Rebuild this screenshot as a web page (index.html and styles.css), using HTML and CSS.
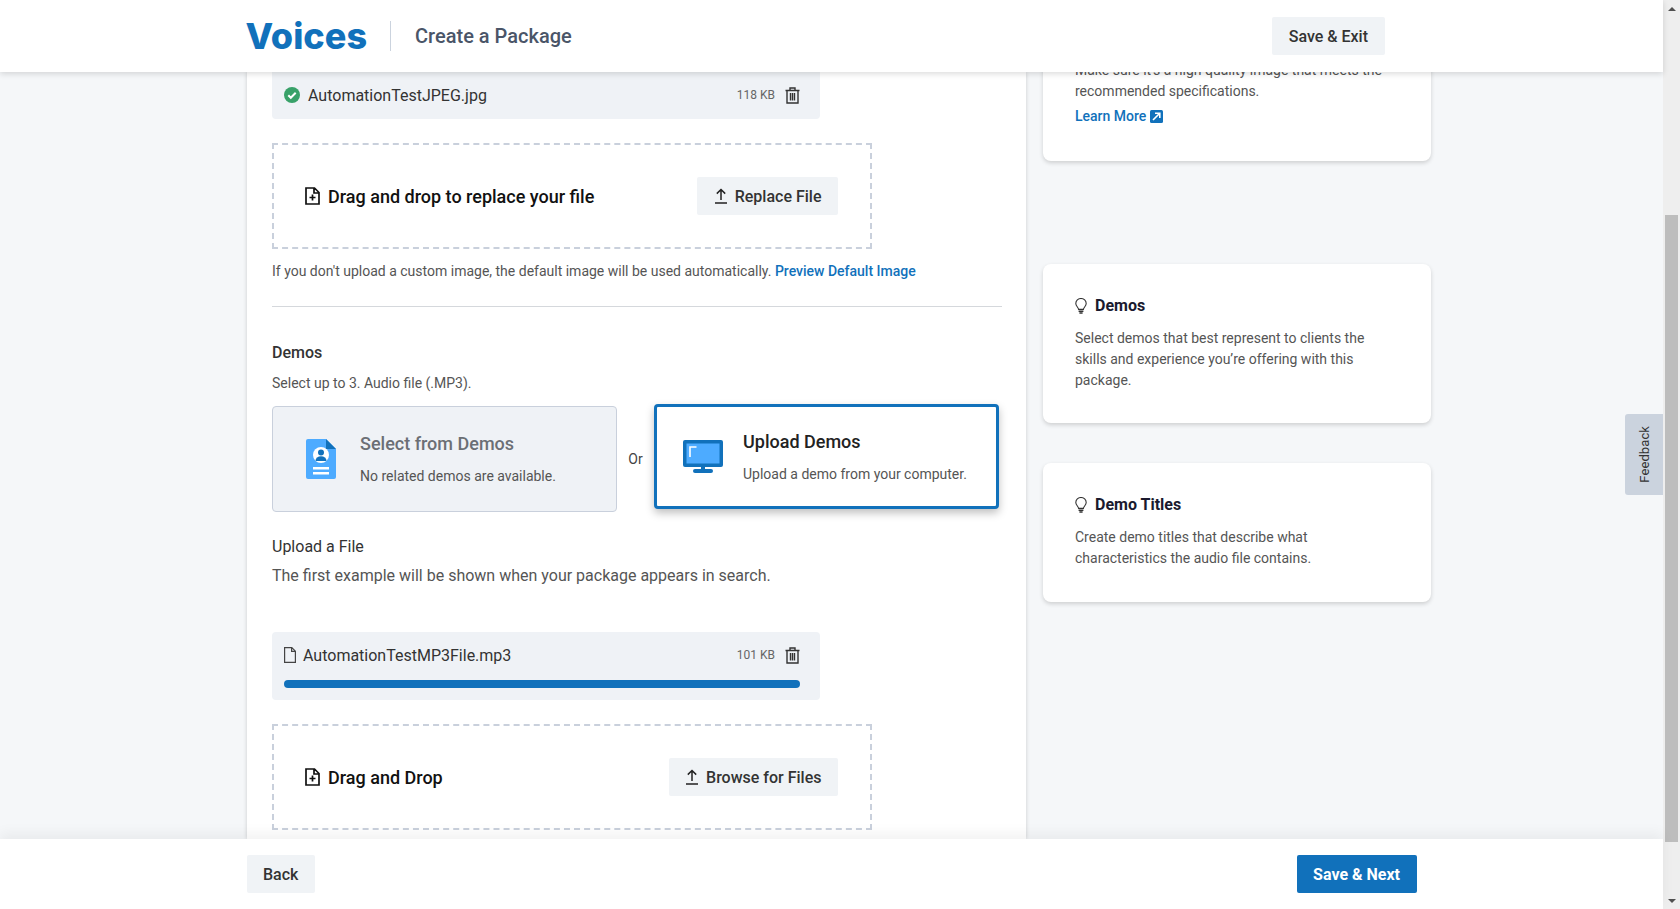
FILE: index.html
```html
<!DOCTYPE html>
<html lang="en">
<head>
    <meta charset="UTF-8">
    <meta name="viewport" content="width=device-width, initial-scale=1.0">
    <title>Create a Package</title>
    <link rel="stylesheet" href="styles.css">
</head>
<body>
    <div class="app">
        <header class="topbar">
            <div class="wrap topbar-inner">
                <div class="brand">
                    <span class="logo">Voices</span>
                    <span class="page-title">Create a Package</span>
                </div>
                <button class="btn">Save &amp; Exit</button>
            </div>
        </header>

        <div class="scroll-area">
            <main class="main-card">
                <div class="file-row file-row-top">
                    <div class="file-line">
                        <svg class="icon-check" width="16" height="16" viewBox="0 0 16 16"><circle cx="8" cy="8" r="8" fill="#38a169"/><path d="M4.3 8.3l2.5 2.5 4.9-5" fill="none" stroke="#fff" stroke-width="2"/></svg>
                        <span class="file-name">AutomationTestJPEG.jpg</span>
                        <span class="file-size">118 KB</span>
                        <svg class="icon-trash" width="15" height="17" viewBox="0 0 15 17" fill="none" stroke="#333" stroke-width="1.4"><path d="M0.5 3.5h14M5 3.5V1h5v2.5M2 3.5V16h11V3.5M5.5 6v7.5M7.5 6v7.5M9.5 6v7.5"/></svg>
                    </div>
                </div>

                <div class="dropzone">
                    <div class="drop-label">
                        <svg width="15" height="18" viewBox="0 0 15 18" fill="none" stroke="#111" stroke-width="1.7"><path d="M1 1h8.5L14 5.5V17H1zM9 1v5h5M7.5 7.5v6M4.5 10.5h6"/></svg>
                        <span>Drag and drop to replace your file</span>
                    </div>
                    <button class="btn btn-upload">
                        <svg width="14" height="16" viewBox="0 0 14 16" fill="none" stroke="#222" stroke-width="1.5"><path d="M7 12V1.5M2.8 5.6L7 1.5l4.2 4.1M1 15h12"/></svg>
                        Replace File
                    </button>
                </div>

                <p class="help">If you don't upload a custom image, the default image will be used automatically. <a class="link" href="#">Preview Default Image</a></p>

                <hr class="divider">

                <h3 class="section-title">Demos</h3>
                <p class="section-sub">Select up to 3. Audio file (.MP3).</p>

                <div class="choice-row">
                    <div class="choice choice-disabled">
                        <svg width="30" height="40" viewBox="0 0 30 40"><path d="M2 0h18l10 10v28a2 2 0 0 1-2 2H2a2 2 0 0 1-2-2V2a2 2 0 0 1 2-2z" fill="#4dabff"/><path d="M20 0l10 10H20z" fill="#1171bb"/><circle cx="15" cy="16" r="8" fill="#fff"/><circle cx="15" cy="13.5" r="3" fill="#1171bb"/><path d="M9.5 22a5.5 4.8 0 0 1 11 0z" fill="#1171bb"/><path d="M7 28h16v2.4H7zM7 33h16v2.4H7z" fill="#fff"/></svg>
                        <div class="choice-text">
                            <div class="choice-title">Select from Demos</div>
                            <div class="choice-desc">No related demos are available.</div>
                        </div>
                    </div>
                    <span class="or">Or</span>
                    <div class="choice choice-active">
                        <svg width="40" height="33" viewBox="0 0 40 33"><rect width="40" height="27" rx="2" fill="#1171bb"/><rect x="3.5" y="3.5" width="33" height="20" fill="#4dabff"/><path d="M7 17V7h6.5" fill="none" stroke="#fff" stroke-width="1.6"/><path d="M18 27h4v3h-4z" fill="#1171bb"/><rect x="10" y="29" width="20" height="4" rx="2" fill="#1171bb"/></svg>
                        <div class="choice-text">
                            <div class="choice-title">Upload Demos</div>
                            <div class="choice-desc">Upload a demo from your computer.</div>
                        </div>
                    </div>
                </div>

                <h3 class="upload-title">Upload a File</h3>
                <p class="upload-sub">The first example will be shown when your package appears in search.</p>

                <div class="file-row file-row-progress">
                    <div class="file-line">
                        <svg class="icon-file" width="12" height="16" viewBox="0 0 12 16" fill="none" stroke="#444" stroke-width="1.2"><path d="M0.6 0.6h7.2l3.6 3.6v11.2H0.6zM7.6 0.6v3.8h3.8"/></svg>
                        <span class="file-name">AutomationTestMP3File.mp3</span>
                        <span class="file-size">101 KB</span>
                        <svg class="icon-trash" width="15" height="17" viewBox="0 0 15 17" fill="none" stroke="#333" stroke-width="1.4"><path d="M0.5 3.5h14M5 3.5V1h5v2.5M2 3.5V16h11V3.5M5.5 6v7.5M7.5 6v7.5M9.5 6v7.5"/></svg>
                    </div>
                    <div class="progress"></div>
                </div>

                <div class="dropzone">
                    <div class="drop-label">
                        <svg width="15" height="18" viewBox="0 0 15 18" fill="none" stroke="#111" stroke-width="1.7"><path d="M1 1h8.5L14 5.5V17H1zM9 1v5h5M7.5 7.5v6M4.5 10.5h6"/></svg>
                        <span>Drag and Drop</span>
                    </div>
                    <button class="btn btn-upload">
                        <svg width="14" height="16" viewBox="0 0 14 16" fill="none" stroke="#222" stroke-width="1.5"><path d="M7 12V1.5M2.8 5.6L7 1.5l4.2 4.1M1 15h12"/></svg>
                        Browse for Files
                    </button>
                </div>
            </main>

            <aside class="sidebar">
                <div class="tip tip-clipped">
                    <p class="tip-text">Make sure it's a high quality image that meets the recommended specifications.</p>
                    <a class="link learn-more" href="#">Learn More
                        <svg width="13" height="13" viewBox="0 0 13 13"><rect width="13" height="13" rx="1.5" fill="#1171bb"/><path d="M3 10l6-6M5 3.2h4.8V8" fill="none" stroke="#fff" stroke-width="1.6"/></svg>
                    </a>
                </div>
                <div class="tip tip-demos">
                    <h4 class="tip-title">
                        <svg width="12" height="16" viewBox="0 0 12 16" fill="none" stroke="#333" stroke-width="1.1"><path d="M3.6 11.4C3.4 9.4 0.8 8.2 0.8 5.4a5.2 4.9 0 0 1 10.4 0c0 2.8-2.6 4-2.8 6z"/><path d="M3.6 13.2h4.8M4.4 15h3.2" stroke-width="1.6"/></svg>
                        Demos
                    </h4>
                    <p class="tip-text">Select demos that best represent to clients the skills and experience you’re offering with this package.</p>
                </div>
                <div class="tip tip-titles">
                    <h4 class="tip-title">
                        <svg width="12" height="16" viewBox="0 0 12 16" fill="none" stroke="#333" stroke-width="1.1"><path d="M3.6 11.4C3.4 9.4 0.8 8.2 0.8 5.4a5.2 4.9 0 0 1 10.4 0c0 2.8-2.6 4-2.8 6z"/><path d="M3.6 13.2h4.8M4.4 15h3.2" stroke-width="1.6"/></svg>
                        Demo Titles
                    </h4>
                    <p class="tip-text">Create demo titles that describe what characteristics the audio file contains.</p>
                </div>
            </aside>

            <div class="feedback"><span>Feedback</span></div>
        </div>

        <footer class="bottombar">
            <div class="wrap bottombar-inner">
                <button class="btn">Back</button>
                <button class="btn btn-primary">Save &amp; Next</button>
            </div>
        </footer>
    </div>

    <div class="scrollbar">
        <div class="arrow arrow-up"></div>
        <div class="track"><div class="thumb"></div></div>
        <div class="arrow arrow-down"></div>
    </div>
</body>
</html>
```

FILE: styles.css
```css
* {
    box-sizing: border-box;
}
body {
    font-family: Roboto, "Liberation Sans", sans-serif;
    margin: 0;
    height: 100vh;
    overflow: hidden;
    display: flex;
    background-color: #f5f7f9;
    color: #222;
}
.app {
    flex: 1;
    min-width: 0;
    display: flex;
    flex-direction: column;
    height: 100%;
}
.wrap {
    width: 1170px;
    margin: 0 auto;
}
button {
    font-family: inherit;
    cursor: pointer;
}
.link {
    color: #1171bb;
    font-weight: 500;
    text-decoration: none;
}

/* Top bar */
.topbar {
    flex: none;
    height: 72px;
    background: #fff;
    box-shadow: 0 2px 6px rgba(0, 0, 0, 0.14);
    position: relative;
    z-index: 2;
}
.topbar-inner {
    height: 100%;
    display: flex;
    align-items: center;
    justify-content: space-between;
    padding-right: 32px;
}
.brand {
    display: flex;
    align-items: center;
}
.logo {
    font-family: Inter, sans-serif;
    font-weight: 800;
    font-size: 36px;
    color: #1171bb;
    margin-left: -1px;
    padding-right: 23px;
}
.page-title {
    font-size: 20px;
    font-weight: 500;
    color: #4a5568;
    border-left: 1px solid #cbd3de;
    line-height: 30px;
    padding-left: 24px;
}
.btn {
    height: 38px;
    padding: 0 16.5px;
    background: #f0f3f6;
    border: 0;
    border-radius: 2px;
    font-size: 16px;
    font-weight: 500;
    color: #333;
}
.btn-primary {
    background: #1171bb;
    color: #fff;
    font-weight: 700;
}
.btn-upload {
    display: flex;
    align-items: center;
    gap: 7px;
}

/* Main column */
.scroll-area {
    flex: 1;
    min-height: 0;
    position: relative;
    overflow: hidden;
    display: flex;
    align-items: flex-start;
    gap: 17px;
    padding-left: 247px;
}
.main-card {
    flex: none;
    width: 779px;
    height: 100%;
    overflow: hidden;
    background: #fff;
    padding: 0 24px 0 25px;
    box-shadow: 0 0 4px rgba(0, 0, 0, 0.18);
}
.file-row {
    width: 548px;
    background: #eff2f6;
    border-radius: 4px;
    padding: 0 20px 0 12px;
}
.file-row-top {
    height: 47px;
    padding-top: 11px;
    border-radius: 0 0 4px 4px;
}
.file-row-progress {
    height: 68px;
    margin-top: 44px;
    padding-top: 11px;
}
.file-line {
    display: flex;
    align-items: center;
    height: 24px;
}
.icon-check {
    margin-right: 8px;
}
.icon-file {
    margin-right: 7px;
}
.file-name {
    flex: 1;
    font-size: 16px;
    color: #333;
}
.file-size {
    font-size: 12px;
    color: #666;
    margin-right: 10px;
}
.progress {
    height: 8px;
    margin-top: 13px;
    background: #1171bb;
    border-radius: 4px;
}
.dropzone {
    width: 600px;
    height: 106px;
    margin-top: 24px;
    border: 2px dashed #c9d0dc;
    display: flex;
    align-items: center;
    justify-content: space-between;
    padding: 0 32px 0 31px;
}
.drop-label {
    display: flex;
    align-items: center;
    gap: 8px;
    font-size: 18px;
    font-weight: 500;
    color: #111;
}
.help {
    margin: 12px 0 0;
    font-size: 14px;
    line-height: 20px;
    color: #555;
}
.divider {
    margin: 25px 0 0;
    border: 0;
    border-top: 1px solid #d5d8dc;
}
.section-title {
    margin: 34px 0 0;
    font-size: 16px;
    line-height: 24px;
    font-weight: 500;
    color: #333;
}
.section-sub {
    margin: 8px 0 0;
    font-size: 14px;
    line-height: 20px;
    color: #555;
}
.choice-row {
    display: flex;
    align-items: flex-start;
    margin-top: 11px;
}
.choice {
    width: 345px;
    display: flex;
    align-items: center;
    border-radius: 4px;
}
.choice-disabled {
    height: 106px;
    margin-top: 2px;
    background: #eff2f6;
    border: 1px solid #c9d0dc;
    padding-left: 33px;
    gap: 24px;
}
.choice-disabled .choice-title {
    color: #6b6f75;
}
.choice-active {
    height: 105px;
    background: #fff;
    border: 3px solid #1171bb;
    box-shadow: 0 4px 8px rgba(0, 0, 0, 0.25);
    padding-left: 26px;
    gap: 20px;
}
.or {
    width: 37px;
    text-align: center;
    font-size: 14px;
    line-height: 20px;
    margin-top: 45px;
    color: #444;
}
.choice-title {
    font-size: 18px;
    line-height: 24px;
    font-weight: 500;
    color: #222;
}
.choice-desc {
    margin-top: 10px;
    font-size: 14px;
    line-height: 20px;
    color: #555;
}
.upload-title {
    margin: 23px 0 0;
    font-size: 16px;
    line-height: 24px;
    font-weight: 400;
    color: #333;
}
.upload-sub {
    margin: 5px 0 0;
    font-size: 16px;
    line-height: 24px;
    color: #555;
}

/* Sidebar tips */
.sidebar {
    flex: none;
    width: 388px;
}
.tip {
    background: #fff;
    border-radius: 8px;
    box-shadow: 0 2px 4px rgba(0, 0, 0, 0.16);
    padding: 32px 41px 32px 32px;
}
.tip-clipped {
    margin-top: -44px;
    height: 133px;
}
.tip-demos {
    margin-top: 103px;
    height: 159px;
}
.tip-titles {
    margin-top: 40px;
    height: 139px;
}
.tip-title {
    display: flex;
    align-items: center;
    gap: 8px;
    margin: 0 0 12px;
    font-size: 16px;
    line-height: 20px;
    font-weight: 700;
    color: #1a1a2e;
}
.tip-text {
    margin: 0;
    font-size: 14px;
    line-height: 21px;
    color: #555;
}
.learn-more {
    display: flex;
    align-items: center;
    gap: 4px;
    margin-top: 4px;
    font-size: 14px;
    line-height: 21px;
}

/* Feedback tab */
.feedback {
    position: absolute;
    right: 0;
    top: 342px;
    width: 38px;
    height: 81px;
    background: #cbd3de;
    border-radius: 3px 0 0 3px;
    display: flex;
    align-items: center;
    justify-content: center;
}
.feedback span {
    writing-mode: vertical-rl;
    transform: rotate(180deg);
    font-size: 13px;
    letter-spacing: 0.1px;
    color: #333;
}

/* Bottom bar */
.bottombar {
    flex: none;
    height: 70px;
    background: #fff;
    box-shadow: 0 -6px 12px rgba(0, 0, 0, 0.05);
    position: relative;
    z-index: 2;
}
.bottombar-inner {
    height: 100%;
    display: flex;
    align-items: center;
    justify-content: space-between;
}

/* Window scrollbar */
.scrollbar {
    flex: none;
    width: 17px;
    height: 100%;
    background: #eeeeee;
    display: flex;
    flex-direction: column;
    align-items: center;
}
.arrow {
    flex: none;
    height: 17px;
    display: flex;
    align-items: center;
    justify-content: center;
}
.arrow::after {
    content: "";
    border-left: 4px solid transparent;
    border-right: 4px solid transparent;
}
.arrow-up::after {
    border-bottom: 4px solid #505050;
}
.arrow-down::after {
    border-top: 4px solid #505050;
}
.track {
    flex: 1;
    width: 13px;
    padding: 198px 0 50px;
    display: flex;
}
.thumb {
    flex: 1;
    background: #bdbdbd;
}
```
